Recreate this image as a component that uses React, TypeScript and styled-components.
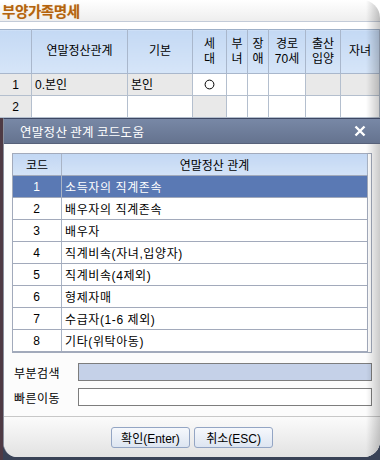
import React from 'react';
import styled, {createGlobalStyle} from 'styled-components';

const GlobalStyle = createGlobalStyle`
  html, body {
    margin: 0;
    padding: 0;
    background: #ffffff;
  }
  body {
    font-family: "Liberation Sans", "Noto Sans CJK KR", sans-serif;
    font-size: 12px;
    color: #000;
  }
`;

const Screen = styled.div`
  width: 380px;
  height: 460px;
  overflow: hidden;
  display: flex;
  flex-direction: column;
  background: #ffffff;
`;

/* ---------- window behind the dialog ---------- */

const BackWindow = styled.div`
  position: relative;
  height: 118px;
  display: flex;
  flex-direction: column;
  background: #ffffff;
  border-top-right-radius: 18px;
  overflow: hidden;

  &::after {
    content: '';
    position: absolute;
    top: 0;
    right: 0;
    bottom: 0;
    width: 14px;
    background: linear-gradient(to right, rgba(0, 0, 0, 0), rgba(0, 0, 0, 0.22));
    pointer-events: none;
  }
`;

const BackTitleBar = styled.div`
  height: 21px;
  display: flex;
  align-items: center;
  padding-left: 2px;
  background: linear-gradient(#ffffff, #eeeeee);
  border-bottom: 1px solid #c3cbd8;
`;

const BackTitle = styled.span`
  font-family: "Noto Sans CJK KR", sans-serif;
  font-size: 14.5px;
  font-weight: 700;
  color: #b4630e;
  letter-spacing: -0.4px;
  text-shadow: 0 0 1px #e9c48f;
`;

const BackGap = styled.div`
  height: 7px;
  background: #ffffff;
`;

const BackTable = styled.table`
  border-collapse: collapse;
  table-layout: fixed;
  width: 380px;
  border-top: 1px solid #9eb0c8;
`;

const BackHead = styled.th<{$w?: number}>`
  width: ${(p) => (p.$w ? `${p.$w}px` : 'auto')};
  height: 43px;
  padding: 0;
  font-weight: 400;
  font-size: 12px;
  line-height: 15px;
  white-space: pre-line;
  text-align: center;
  background: linear-gradient(#c4d9f4, #d6e5f8);
  border-right: 1px solid #a9b7cc;
  border-bottom: 1px solid #a9b7cc;
`;

const BackCell = styled.td<{$grey?: boolean; $align?: string}>`
  height: 21px;
  padding: 0 3px;
  font-size: 12px;
  line-height: 1;
  text-align: ${(p) => p.$align || 'left'};
  background: ${(p) => (p.$grey ? '#e9e9e9' : '#ffffff')};
  border-right: 1px solid #b4bfce;
  border-bottom: 1px solid #b4bfce;
  white-space: nowrap;
  overflow: hidden;

  svg {
    display: block;
    margin: 0 auto;
  }
`;

/* ---------- dialog ---------- */

const LowerArea = styled.div`
  flex: 1;
  display: flex;
  background: linear-gradient(to right, #4e3a44 0, #4e3a44 3px, #394256 3px);
`;

const Dialog = styled.div`
  position: relative;
  flex: 1;
  margin-left: 3px;
  margin-bottom: 3px;
  display: flex;
  flex-direction: column;
  background: #fcfcfc;
  border-top: 1px solid #3d4763;
  border-left: 1px solid #8a8f9c;
  border-bottom-left-radius: 14px;
  border-bottom-right-radius: 16px;
  overflow: hidden;

  &::after {
    content: '';
    position: absolute;
    top: 25px;
    right: 0;
    bottom: 0;
    width: 14px;
    background: linear-gradient(to right, rgba(0, 0, 0, 0), rgba(0, 0, 0, 0.2));
    pointer-events: none;
  }
`;

const DialogTitleBar = styled.div`
  height: 24px;
  display: flex;
  align-items: center;
  justify-content: space-between;
  padding: 0 14px 0 16px;
  background: linear-gradient(#7888a6, #65738f);
  border-bottom: 1px solid #566079;
  color: #ffffff;
`;

const DialogTitle = styled.span`
  font-family: "Noto Sans CJK KR", sans-serif;
  font-size: 12.5px;
  letter-spacing: 0.3px;
`;

const CloseButton = styled.span`
  display: flex;
  width: 12px;
  height: 12px;
`;

const DialogBody = styled.div`
  flex: 1;
  display: flex;
  flex-direction: column;
  padding: 9px 8px 0 8px;
`;

const GridFrame = styled.div`
  border: 1px solid #a2aabb;
  padding-right: 3px;
  background: #ffffff;
`;

const CodeTable = styled.table`
  width: 100%;
  border-collapse: collapse;
  table-layout: fixed;
  border-right: 1px solid #a2aabb;
`;

const CodeHead = styled.th<{$w?: number}>`
  width: ${(p) => (p.$w ? `${p.$w}px` : 'auto')};
  height: 21px;
  padding: 0;
  font-weight: 400;
  font-size: 12px;
  text-align: center;
  background: linear-gradient(#c2d7f3, #d4e3f7);
  border-right: 1px solid #a9b4c6;
  border-bottom: 1px solid #a2aabb;
`;

const CodeCell = styled.td<{$selected?: boolean; $center?: boolean}>`
  height: 21px;
  padding: 0 0 0 3px;
  font-size: 12px;
  letter-spacing: 0.6px;
  text-align: ${(p) => (p.$center ? 'center' : 'left')};
  padding-left: ${(p) => (p.$center ? '0' : '3px')};
  color: ${(p) => (p.$selected ? '#ffffff' : '#000000')};
  background: ${(p) => (p.$selected ? '#5a79b4' : '#ffffff')};
  border-right: 1px solid #a9b4c6;
  border-bottom: 1px solid #a2aabb;
  white-space: nowrap;
  &:last-child {
    border-right: none;
  }
`;

const FieldRow = styled.div<{$top: number}>`
  display: flex;
  align-items: center;
  margin-top: ${(p) => p.$top}px;
  padding-left: 2px;
`;

const FieldLabel = styled.span`
  width: 64px;
  font-size: 12px;
  letter-spacing: 0.5px;
`;

const FieldInput = styled.div<{$fill?: boolean}>`
  flex: 1;
  height: 16px;
  border: 1px solid #7d7d7d;
  background: ${(p) => (p.$fill ? '#c5d1e8' : '#ffffff')};
`;

const Footer = styled.div`
  margin-top: 9px;
  height: 41px;
  display: flex;
  justify-content: center;
  align-items: flex-start;
  gap: 4px;
  padding-top: 10px;
  box-sizing: border-box;
  border-top: 1px solid #c8c8c8;
  background: linear-gradient(#fbfbfb, #e2e2e2);
`;

const Button = styled.button`
  width: 79px;
  height: 21px;
  padding: 0;
  font-family: "Liberation Sans", "Noto Sans CJK KR", sans-serif;
  font-size: 12px;
  color: #000;
  background: linear-gradient(#f6f8fc, #dde5f1);
  border: 1px solid #93a5c4;
  border-radius: 3px;
`;

const CheckMark = () => (
  <svg width="11" height="11" viewBox="0 0 11 11">
    <circle cx="5.5" cy="5.5" r="4.4" fill="none" stroke="#000" strokeWidth="1" />
  </svg>
);

const headCols: {label: string; w?: number}[] = [
  {label: '', w: 31},
  {label: '연말정산관계', w: 95},
  {label: '기본', w: 64},
  {label: '세\n대', w: 33},
  {label: '부\n녀', w: 20},
  {label: '장\n애', w: 20},
  {label: '경로\n70세', w: 36},
  {label: '출산\n입양', w: 34},
  {label: '자녀'},
];

type BackCellData = {text: string; grey: boolean; align?: string; mark?: boolean};

const backRows: BackCellData[][] = [
  [
    {text: '1', grey: true, align: 'center'},
    {text: '0.본인', grey: true},
    {text: '본인', grey: true},
    {text: '', grey: false, align: 'center', mark: true},
    {text: '', grey: false},
    {text: '', grey: false},
    {text: '', grey: false},
    {text: '', grey: true},
    {text: '', grey: true},
  ],
  [
    {text: '2', grey: true, align: 'center'},
    {text: '', grey: false},
    {text: '', grey: false},
    {text: '', grey: true},
    {text: '', grey: false},
    {text: '', grey: false},
    {text: '', grey: false},
    {text: '', grey: false},
    {text: '', grey: false},
  ],
];

const codes = [
  '소득자의 직계존속',
  '배우자의 직계존속',
  '배우자',
  '직계비속(자녀,입양자)',
  '직계비속(4제외)',
  '형제자매',
  '수급자(1-6 제외)',
  '기타(위탁아동)',
];

export default function App() {
  return (
    <>
      <GlobalStyle />
      <Screen>
        <BackWindow>
          <BackTitleBar>
            <BackTitle>부양가족명세</BackTitle>
          </BackTitleBar>
          <BackGap />
          <BackTable>
            <thead>
              <tr>
                {headCols.map((c, i) => (
                  <BackHead key={i} $w={c.w}>
                    {c.label}
                  </BackHead>
                ))}
              </tr>
            </thead>
            <tbody>
              {backRows.map((row, r) => (
                <tr key={r}>
                  {row.map((cell, i) => (
                    <BackCell key={i} $grey={cell.grey} $align={cell.align}>
                      {cell.mark ? <CheckMark /> : cell.text}
                    </BackCell>
                  ))}
                </tr>
              ))}
            </tbody>
          </BackTable>
        </BackWindow>

        <LowerArea>
          <Dialog>
            <DialogTitleBar>
              <DialogTitle>연말정산 관계 코드도움</DialogTitle>
              <CloseButton>
                <svg width="12" height="12" viewBox="0 0 12 12">
                  <path d="M1.5 1.5 L10.5 10.5 M10.5 1.5 L1.5 10.5" stroke="#ffffff" strokeWidth="2.4" />
                </svg>
              </CloseButton>
            </DialogTitleBar>
            <DialogBody>
              <GridFrame>
                <CodeTable>
                  <thead>
                    <tr>
                      <CodeHead $w={48}>코드</CodeHead>
                      <CodeHead>연말정산 관계</CodeHead>
                    </tr>
                  </thead>
                  <tbody>
                    {codes.map((name, i) => (
                      <tr key={i}>
                        <CodeCell $center $selected={i === 0}>
                          {i + 1}
                        </CodeCell>
                        <CodeCell $selected={i === 0}>{name}</CodeCell>
                      </tr>
                    ))}
                  </tbody>
                </CodeTable>
              </GridFrame>
              <FieldRow $top={10}>
                <FieldLabel>부분검색</FieldLabel>
                <FieldInput $fill />
              </FieldRow>
              <FieldRow $top={7}>
                <FieldLabel>빠른이동</FieldLabel>
                <FieldInput />
              </FieldRow>
            </DialogBody>
            <Footer>
              <Button>확인(Enter)</Button>
              <Button>취소(ESC)</Button>
            </Footer>
          </Dialog>
        </LowerArea>
      </Screen>
    </>
  );
}
